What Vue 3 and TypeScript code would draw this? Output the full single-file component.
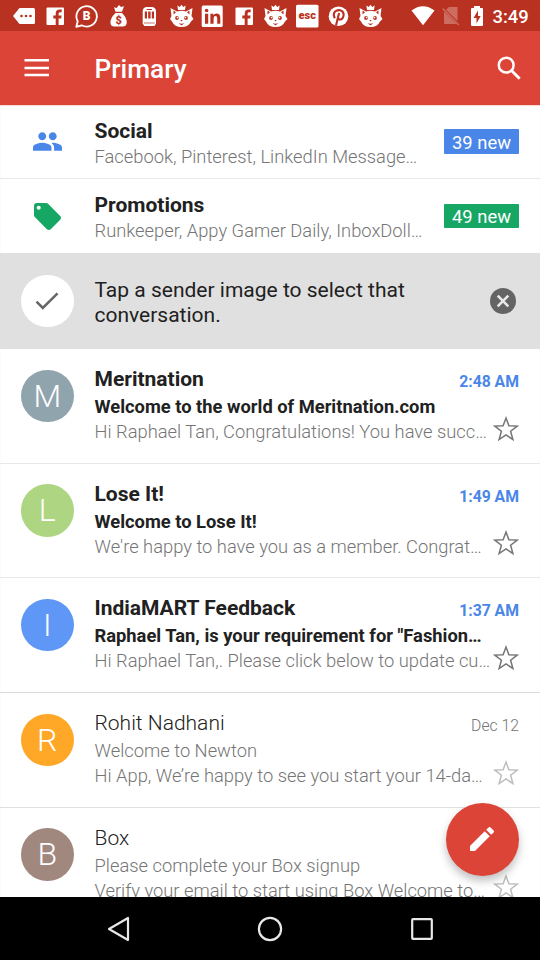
<script setup lang="ts">
interface Category {
  name: string
  preview: string
  badge: string
  kind: 'social' | 'promo'
}

interface Mail {
  initial: string
  tone: string
  sender: string
  subject: string
  snippet: string
  time: string
  unread: boolean
}

type StatusIcon = 'more' | 'facebook' | 'bubble' | 'money' | 'train' | 'fox' | 'linkedin' | 'esc' | 'pinterest'

const notifications: StatusIcon[] = [
  'more', 'facebook', 'bubble', 'money', 'train', 'fox', 'linkedin', 'facebook', 'fox', 'esc', 'pinterest', 'fox',
]

const categories: Category[] = [
  { name: 'Social', preview: 'Facebook, Pinterest, LinkedIn Message…', badge: '39 new', kind: 'social' },
  { name: 'Promotions', preview: 'Runkeeper, Appy Gamer Daily, InboxDoll…', badge: '49 new', kind: 'promo' },
]

const mails: Mail[] = [
  { initial: 'M', tone: 'slate', sender: 'Meritnation', subject: 'Welcome to the world of Meritnation.com', snippet: 'Hi Raphael Tan, Congratulations! You have succ…', time: '2:48 AM', unread: true },
  { initial: 'L', tone: 'lime', sender: 'Lose It!', subject: 'Welcome to Lose It!', snippet: "We're happy to have you as a member. Congrat…", time: '1:49 AM', unread: true },
  { initial: 'I', tone: 'blue', sender: 'IndiaMART Feedback', subject: 'Raphael Tan, is your requirement for "Fashion…', snippet: 'Hi Raphael Tan,. Please click below to update cu…', time: '1:37 AM', unread: true },
  { initial: 'R', tone: 'orange', sender: 'Rohit Nadhani', subject: 'Welcome to Newton', snippet: "Hi App, We’re happy to see you start your 14-da…", time: 'Dec 12', unread: false },
  { initial: 'B', tone: 'brown', sender: 'Box', subject: 'Please complete your Box signup', snippet: 'Verify your email to start using Box Welcome to…', time: '', unread: false },
]
</script>

<template>
  <div class="screen">
    <header class="status">
      <div class="notes">
        <svg v-for="(icon, i) in notifications" :key="i" class="note" viewBox="0 0 24 24">
          <template v-if="icon === 'more'">
            <path d="M7.500 4H21.500q1.500 0 1.500 1.500V18.500Q23 20 21.500 20H7.500L1 12Z" fill="#fff" />
            <g fill="#b93221"><circle cx="9.500" cy="12" r="1.300" /><circle cx="14" cy="12" r="1.300" /><circle cx="18.500" cy="12" r="1.300" /></g>
          </template>
          <template v-else-if="icon === 'facebook'">
            <rect x="2.500" y="3.500" width="17.500" height="17.500" rx="1" fill="#fff" />
            <path d="M14.600 21V14.400H17.200L17.600 11.400H14.600V9.700Q14.600 8.300 16.100 8.300H17.700V5.600Q16.900 5.500 15.600 5.500Q11.700 5.500 11.700 9.300V11.400H9.300V14.400H11.700V21Z" fill="#b93221" />
          </template>
          <template v-else-if="icon === 'bubble'">
            <path d="M1.300 22.800L2.700 17.300A10.200 10.200 0 1 1 6.700 21.300Z" fill="none" stroke="#fff" stroke-width="1.800" stroke-linejoin="round" />
            <text x="11.700" y="16.200" class="mark" font-size="12">B</text>
          </template>
          <template v-else-if="icon === 'money'">
            <path d="M8.500 7.800L7 3.300L9.600 4L12 1L14 3L17 2.200L15 7.800Z M8.500 9H15Q20 14 19.700 19Q19.300 22.500 15.500 22.500H7.500Q3.700 22.500 3.500 19Q3.200 14 8.500 9Z" fill="#fff" />
            <text x="11.700" y="20" class="mark cut" font-size="11">$</text>
          </template>
          <template v-else-if="icon === 'train'">
            <path d="M4.700 19.500V7.500Q4.700 3 9 3H13.500Q18 3 18 7.500V19.500L16.500 22H6.200Z" fill="#fff" />
            <path d="M6.800 7.500H9V14.500H6.800Z M10.200 7.500H12.600V14.500H10.200Z M13.800 7.500H16V14.500H13.800Z M8.700 5H14V6H8.700Z" fill="#b93221" />
            <path d="M6 19H16.800" stroke="#b93221" stroke-width=".7" />
          </template>
          <template v-else-if="icon === 'fox'">
            <path d="M.5 4L7 7.500Q11.500 5.800 16 7.500L22.500 4L21.500 12L23.500 15L21 17.500Q18.500 23 11.500 23Q4.500 23 2 17.500L0 15L1.500 12Z M8 6L7.400 1.500L9.800 3L11.500 .8L13.200 3L15.600 1.500L15 6Z" fill="#fff" />
            <g fill="#b93221"><path d="M3.500 6.500L6 8.300L3.500 10.500Z M19.500 6.500L17 8.300L19.500 10.500Z M10.300 16H12.700L11.500 17.500Z" /><circle cx="7" cy="14" r="1.900" /><circle cx="16" cy="14" r="1.900" /><path d="M8.500 19Q11.500 20.300 14.500 19L11.500 21.500Z" /></g>
            <circle cx="7.500" cy="13.600" r=".8" fill="#fff" /><circle cx="15.500" cy="13.600" r=".8" fill="#fff" />
          </template>
          <template v-else-if="icon === 'linkedin'">
            <rect x=".7" y="1.500" width="21" height="21.500" rx="1.500" fill="#fff" />
            <path d="M4 9.700H7.200V19.700H4Z M9.400 9.700H12.400V11.200Q13.400 9.400 15.500 9.400Q19.300 9.400 19.300 13.700V19.700H16.200V14.400Q16.200 12.100 14.500 12.100Q12.600 12.100 12.600 14.400V19.700H9.400Z" fill="#b93221" />
            <circle cx="5.600" cy="6.500" r="1.800" fill="#b93221" />
          </template>
          <template v-else-if="icon === 'esc'">
            <rect x="0" y=".8" width="22.500" height="22.700" rx="1.500" fill="#fff" />
            <text x="11.200" y="15.200" class="mark cut" font-size="11">esc</text>
          </template>
          <template v-else>
            <circle cx="11.500" cy="12.300" r="9.800" fill="#fff" />
            <path d="M7.800 14.200Q5.300 9 9 6.900Q12.700 5 15.500 7.500Q17.700 10.300 15.700 14Q13.100 17 10.800 14.300M12.100 9L9 21.500" fill="none" stroke="#b93221" stroke-width="2.100" />
          </template>
        </svg>
      </div>
      <svg class="wifi" viewBox="0 0 24 20"><path d="M.5 4.500Q12-4 23.500 4.500L12 19.300Z" fill="#fff" /></svg>
      <svg class="nosim" viewBox="0 0 18 20"><path d="M7 1H15.500V15L4 3.700Z M2 5.500L14.500 18H3Q2 18 2 17Z" fill="#cd6d62" /><path d="M.7 2.500L16.800 19" stroke="#cd6d62" stroke-width="1.500" /></svg>
      <svg class="battery" viewBox="0 0 14 20"><path d="M4 0H10V2H12Q13 2 13 3V19Q13 20 12 20H2Q1 20 1 19V3Q1 2 2 2H4Z" fill="#fff" /><path d="M8 4.500L3.500 12H6.500V17.500L10.700 10H8Z" fill="#b93221" /></svg>
      <span class="clock">3:49</span>
    </header>

    <nav class="toolbar">
      <svg class="menu" viewBox="0 0 26 20"><path d="M.5 2.300H25M.5 10H25M.5 17H25" stroke="#fff" stroke-width="2.500" /></svg>
      <h1>Primary</h1>
      <svg class="search" viewBox="0 0 24 24"><circle cx="9.200" cy="9.200" r="7.400" fill="none" stroke="#fff" stroke-width="2.500" /><path d="M14.500 14.500L22.700 22.700" stroke="#fff" stroke-width="2.900" /></svg>
    </nav>

    <main class="list">
      <section v-for="c in categories" :key="c.name" class="category" :class="c.kind">
        <div class="lead">
          <svg v-if="c.kind === 'social'" class="people" viewBox="1 5 22 14"><path d="M16 11c1.660 0 2.990-1.340 2.990-3S17.660 5 16 5s-3 1.340-3 3 1.340 3 3 3zm-8 0c1.660 0 2.990-1.340 2.990-3S9.660 5 8 5 5 6.340 5 8s1.340 3 3 3zm0 2c-2.330 0-7 1.170-7 3.500V19h14v-2.500c0-2.330-4.670-3.500-7-3.500zm8 0c-.29 0-.62.02-.97.05 1.160.84 1.970 1.970 1.970 3.450V19h6v-2.500c0-2.330-4.670-3.500-7-3.500z" /></svg>
          <svg v-else class="tag" viewBox="2 2 20 20"><path d="M21.410 11.580l-9-9C12.050 2.220 11.550 2 11 2H4c-1.100 0-2 .9-2 2v7c0 .55.22 1.050.59 1.420l9 9c.36.36.86.58 1.410.58s1.050-.22 1.410-.59l7-7c.37-.36.59-.86.59-1.410s-.23-1.060-.59-1.420zM5.500 7C4.670 7 4 6.330 4 5.500S4.670 4 5.500 4 7 4.670 7 5.500 6.330 7 5.500 7z" /></svg>
        </div>
        <div class="body">
          <h2>{{ c.name }}</h2>
          <p class="snippet">{{ c.preview }}</p>
        </div>
        <span class="badge">{{ c.badge }}</span>
      </section>

      <section class="tip">
        <div class="avatar check">
          <svg viewBox="0 0 24 18"><path d="M1.500 9.700L7.800 16L22.500 1.300" fill="none" stroke="#666" stroke-width="2.500" /></svg>
        </div>
        <p>Tap a sender image to select that conversation.</p>
        <svg class="close" viewBox="0 0 26 26"><circle cx="13" cy="13" r="13" fill="#646464" /><path d="M7.700 7.700L18.300 18.300M18.300 7.700L7.700 18.300" stroke="#e8e8e8" stroke-width="2.600" /></svg>
      </section>

      <article v-for="m in mails" :key="m.sender" class="mail" :class="{ unread: m.unread }">
        <div class="avatar" :class="m.tone">{{ m.initial }}</div>
        <div class="body">
          <div class="top"><h2>{{ m.sender }}</h2><time>{{ m.time }}</time></div>
          <p class="subject">{{ m.subject }}</p>
          <p class="snippet">{{ m.snippet }}</p>
        </div>
        <svg class="star" viewBox="0 0 26 26"><path d="M13 2.100L15.900 9.800L24.200 10.100L17.600 15.200L19.900 23.600L13 18.900L6.100 23.600L8.400 15.200L1.800 10.100L10.100 9.800Z" /></svg>
      </article>
    </main>

    <button class="compose" aria-label="Compose">
      <svg viewBox="3 3 18 18"><path d="M3 17.250V21h3.750L17.810 9.940l-3.750-3.750L3 17.250zM20.710 7.040c.39-.39.39-1.020 0-1.410l-2.340-2.340c-.39-.39-1.020-.39-1.410 0l-1.830 1.830 3.750 3.750 1.830-1.830z" fill="#fff" /></svg>
    </button>

    <footer class="navbar">
      <svg viewBox="0 0 26 26"><path d="M23 2V24L4 13Z" /></svg>
      <svg viewBox="0 0 26 26"><circle cx="13" cy="13" r="11.100" /></svg>
      <svg viewBox="0 0 26 26"><rect x="3.200" y="3.200" width="19.600" height="19.600" rx=".8" /></svg>
    </footer>
  </div>
</template>

<style>
body {
  margin: 0;
  overflow: hidden;
}
</style>

<style scoped>
.screen {
  position: relative;
  display: flex;
  flex-direction: column;
  width: 540px;
  height: 960px;
  overflow: hidden;
  background: #fff;
  color: #212121;
  font-family: Roboto, "Liberation Sans", sans-serif;
}
h1, h2, p { margin: 0; white-space: nowrap; }
svg { display: block; flex: none; }

.status {
  flex: none;
  display: flex;
  align-items: center;
  height: 31px;
  padding-left: 12px;
  box-sizing: border-box;
  background: #b93221;
}
.notes { display: flex; gap: 7.500px; margin-right: 28px; }
.note { width: 24px; height: 24px; }
.mark { fill: #fff; font-weight: 900; text-anchor: middle; }
.mark.cut { fill: #b93221; }
.wifi { width: 24px; height: 20px; }
.nosim { width: 18px; height: 20px; margin-left: 7px; }
.battery { width: 14px; height: 20px; margin-left: 10px; }
.clock {
  margin-left: 9px;
  padding-top: 2px;
  color: #fff;
  font-size: 18.400px;
  font-weight: 500;
  line-height: 24px;
}

.toolbar {
  flex: none;
  display: flex;
  align-items: center;
  height: 74px;
  padding: 0 20px 0 24px;
  box-sizing: border-box;
  background: #db4437;
  color: #fff;
}
.menu { width: 26px; height: 20px; }
.toolbar h1 {
  flex: 1;
  margin-left: 44.500px;
  padding-top: 2px;
  font-size: 26.250px;
  font-weight: 500;
  line-height: 32px;
}
.search { width: 24px; height: 24px; margin-right: -.5px; }

.list {
  flex: 1;
  min-height: 0;
  overflow: hidden;
  box-shadow: inset 0 1px 1px #f3d6d2;
}
h2 { font-size: 21px; font-weight: 700; line-height: 27px; }
.snippet { color: #757575; font-size: 18.340px; font-weight: 300; line-height: 26px; }
.body { flex: 1; min-width: 0; }

.category {
  display: flex;
  box-sizing: border-box;
  height: 74px;
  padding: 13px 21px 0 0;
  border-bottom: 1px solid #e8e8e8;
}
.category h2 { height: 26px; }
.category.promo { border-bottom: 0; }
.lead { display: flex; justify-content: center; width: 94.500px; }
.people { width: 29px; height: 19px; margin-top: 14px; fill: #4a86e8; }
.tag { width: 27px; height: 27px; margin-top: 11px; fill: #16a765; }
.badge {
  width: 75px;
  height: 25px;
  margin-top: 11px;
  border-radius: 1px;
  color: #fff;
  font-size: 18.400px;
  line-height: 27px;
  text-align: center;
}
.social .badge { background: #4a86e8; }
.promo .badge { background: #16a765; margin-top: 12px; height: 24px; line-height: 26px; }

.tip {
  display: flex;
  align-items: center;
  box-sizing: border-box;
  height: 96px;
  padding: 0 24px 0 21px;
  background: #e0e0e0;
}
.tip p {
  flex: 1;
  margin-right: 70px;
  padding-top: 3px;
  font-size: 21px;
  line-height: 25px;
  white-space: normal;
}
.close { width: 26px; height: 26px; }

.avatar {
  flex: none;
  width: 52.500px;
  height: 52.500px;
  margin-right: 21px;
  border-radius: 50%;
  color: #fff;
  font-size: 32px;
  font-weight: 300;
  line-height: 53px;
  text-align: center;
}
.check { display: flex; align-items: center; justify-content: center; background: #fff; }
.check svg { width: 24px; height: 18px; }
.slate { background: #90a4ae; }
.lime { background: #aed581; }
.blue { background: #5e97f6; }
.orange { background: #ffa726; }
.brown { background: #a1887f; }

.mail {
  display: flex;
  box-sizing: border-box;
  height: 114.700px;
  padding: 17px 21px 0;
  border-bottom: 1px solid #e0e0e0;
}
.mail.unread { border-color: #e8e8e8; }
.mail:nth-of-type(3) { border-color: #dcdcdc; }
.mail .avatar { margin-top: 3.500px; }
.mail h2 { font-weight: 300; }
.top { display: flex; justify-content: space-between; margin-right: -26px; }
time { color: #757575; font-size: 15.750px; font-weight: 300; line-height: 27px; padding-top: 2px; height: 25px; }
.subject { margin-top: 1px; height: 25px; color: #757575; font-size: 18.340px; font-weight: 300; line-height: 26px; }
.unread h2, .unread .subject { color: #212121; font-weight: 700; }
.unread time { color: #4a86e8; font-weight: 700; }
.star { width: 26px; height: 26px; margin: 49.500px .5px 0 -.5px; fill: none; stroke: #bdbdbd; stroke-width: 1.500; }
.unread .star { stroke: #757575; }

.compose {
  position: absolute;
  left: 445.500px;
  top: 802.500px;
  display: flex;
  align-items: center;
  justify-content: center;
  width: 73.500px;
  height: 73.500px;
  padding: 0;
  border: 0;
  border-radius: 50%;
  background: #db4437;
  box-shadow: 0 5px 9px rgba(0, 0, 0, .25);
}
.compose svg { width: 24px; height: 24px; }

.navbar {
  flex: none;
  display: flex;
  align-items: center;
  justify-content: center;
  gap: 126px;
  height: 63px;
  background: #000;
}
.navbar svg { width: 26px; height: 26px; fill: none; stroke: #e8e8e8; stroke-width: 2.200; stroke-linejoin: round; }
</style>
